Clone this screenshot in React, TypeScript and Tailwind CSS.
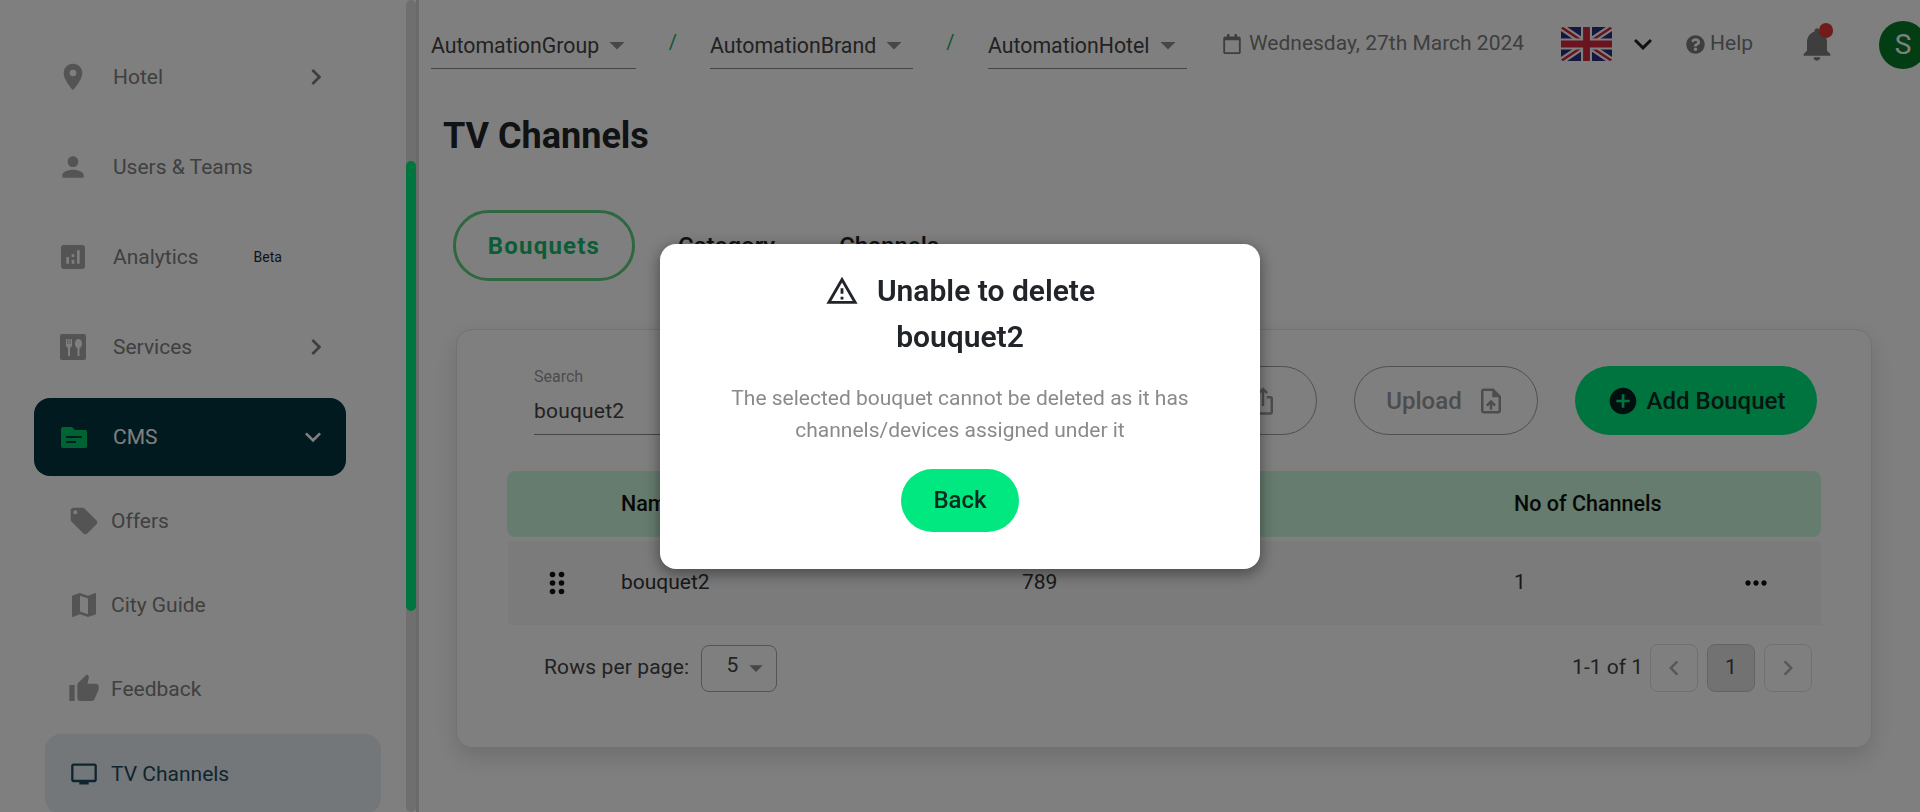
import { ReactNode } from 'react'
import {
  MdPlace,
  MdPerson,
  MdAnalytics,
  MdLocalOffer,
  MdMap,
  MdThumbUp,
  MdOutlineTv,
  MdChevronRight,
  MdExpandMore,
  MdArrowDropDown,
  MdOutlineWarningAmber,
  MdUploadFile,
  MdIosShare,
  MdAddCircle,
  MdMoreHoriz,
  MdNotifications,
} from 'react-icons/md'
import { FaQuestionCircle, FaRegCalendar } from 'react-icons/fa'

function ServicesIcon() {
  return (
    <svg width="26" height="26" viewBox="0 0 26 26" fill="currentColor">
      <path fillRule="evenodd" d="M2 0h22a2 2 0 0 1 2 2v22a2 2 0 0 1-2 2H2a2 2 0 0 1-2-2V2a2 2 0 0 1 2-2Zm4 5v6c0 1.4.9 2.5 2 2.8V22h2v-8.200c1.100-.3 2-1.400 2-2.800V5h-1.400v5h-.9V5H8.300v5h-.9V5H6Zm12.500 0c-2 0-3.500 2-3.500 4.800 0 2.200 1 3.900 2.500 4.400V22h2v-7.800c1.500-.5 2.500-2.200 2.500-4.400C22 7 20.500 5 18.500 5Z" />
    </svg>
  )
}

function FolderIcon() {
  return (
    <svg width="26" height="21" viewBox="0 0 26 21" fill="currentColor">
      <path fillRule="evenodd" d="M2 0h9l3 3h10a2 2 0 0 1 2 2v14a2 2 0 0 1-2 2H2a2 2 0 0 1-2-2V2a2 2 0 0 1 2-2Zm3 9v2h16V9H5Zm0 5v2h10v-2H5Z" />
    </svg>
  )
}

function DragDots() {
  return (
    <svg width="16" height="24" viewBox="0 0 16 24" fill="#111">
      <circle cx="3.500" cy="3.500" r="2.800" />
      <circle cx="12.500" cy="3.500" r="2.800" />
      <circle cx="3.500" cy="12" r="2.800" />
      <circle cx="12.500" cy="12" r="2.800" />
      <circle cx="3.500" cy="20.500" r="2.800" />
      <circle cx="12.500" cy="20.500" r="2.800" />
    </svg>
  )
}

function UkFlag() {
  return (
    <svg width="51" height="34" viewBox="0 0 60 40" className="rounded-[3px]">
      <rect width="60" height="40" fill="#2b2f7f" />
      <path d="M0 0 60 40M60 0 0 40" stroke="#fff" strokeWidth="8" />
      <path d="M0 0 60 40M60 0 0 40" stroke="#d3293f" strokeWidth="3" />
      <path d="M30 0v40M0 20h60" stroke="#fff" strokeWidth="13" />
      <path d="M30 0v40M0 20h60" stroke="#d3293f" strokeWidth="8" />
    </svg>
  )
}

function NavItem({ icon, label, chevron, badge }: { icon: ReactNode; label: string; chevron?: boolean; badge?: string }) {
  return (
    <div className="flex h-[90px] items-center text-[21px] text-[#808080]">
      <span className="flex w-[113px] justify-center pl-[33px] text-[#a8a8a8]">{icon}</span>
      <span className="pt-[2px]">{label}</span>
      {badge && <span className="ml-[55px] text-[14px] text-[#1f2937]">{badge}</span>}
      {chevron && (
        <span className="ml-auto mr-[74px] flex text-[#7c7c7c]">
          <MdChevronRight size={32} />
        </span>
      )}
    </div>
  )
}

function SubItem({ icon, label }: { icon: ReactNode; label: string }) {
  return (
    <div className="flex h-[84px] items-center text-[21px] text-[#808080]">
      <span className="flex w-[111px] justify-center pl-[57px] text-[#a8a8a8]">{icon}</span>
      <span className="pt-[2px]">{label}</span>
    </div>
  )
}

function Sidebar() {
  return (
    <aside className="flex h-full w-[419px] shrink-0 overflow-hidden">
      <nav className="w-[406px] shrink-0 pt-[32px]">
        <NavItem icon={<MdPlace size={32} />} label="Hotel" chevron />
        <NavItem icon={<MdPerson size={32} />} label="Users & Teams" />
        <NavItem icon={<MdAnalytics size={32} />} label="Analytics" badge="Beta" />
        <NavItem icon={<ServicesIcon />} label="Services" chevron />
        <div className="ml-[34px] mt-[6px] flex h-[78px] w-[312px] items-center rounded-[16px] bg-[#03343f] text-[21px] text-white">
          <span className="flex w-[79px] justify-center text-[#00c766]">
            <FolderIcon />
          </span>
          <span className="pt-[2px]">CMS</span>
          <span className="ml-auto mr-[17px] flex">
            <MdExpandMore size={32} />
          </span>
        </div>
        <div className="mt-[3px]">
          <SubItem icon={<MdLocalOffer size={32} />} label="Offers" />
          <SubItem icon={<MdMap size={32} />} label="City Guide" />
          <SubItem icon={<MdThumbUp size={32} />} label="Feedback" />
        </div>
        <div className="ml-[45px] mt-[3px] flex h-[80px] w-[336px] items-center rounded-[16px] bg-[#e6eef2] text-[21px] text-[#1f4a5c]">
          <span className="flex w-[66px] justify-center pl-[25px] pr-[13px]">
            <MdOutlineTv size={32} />
          </span>
          <span className="pt-[2px]">TV Channels</span>
        </div>
      </nav>
      <div className="h-full w-[10px] shrink-0 rounded-[5px] bg-[#dedede] pt-[161px]">
        <div className="h-[450px] rounded-[5px] bg-[#00eb7e]" />
      </div>
      <div className="h-full w-[3px] shrink-0 bg-[#d4d4d4]" />
    </aside>
  )
}

function Crumb({ label, width }: { label: string; width: string }) {
  return (
    <div className={`${width} flex h-[48px] shrink-0 items-center whitespace-nowrap border-b border-[#8a8a8a] text-[21.300px] text-[#444]`}>
      <span className="pt-[2px]">{label}</span>
      <span className="flex text-[#8e8e8e]">
        <MdArrowDropDown size={36} />
      </span>
    </div>
  )
}

function Header() {
  return (
    <header className="flex h-[69px] items-end pl-[12px]">
      <Crumb label="AutomationGroup" width="w-[205px]" />
      <span className="w-[74px] shrink-0 pb-[12px] text-center text-[20px] text-[#16b063]">/</span>
      <Crumb label="AutomationBrand" width="w-[203px]" />
      <span className="w-[75px] shrink-0 pb-[12px] text-center text-[20px] text-[#16b063]">/</span>
      <Crumb label="AutomationHotel" width="w-[199px]" />
      <div className="mb-[1px] ml-[35px] flex h-[48px] shrink-0 items-center gap-[7px] whitespace-nowrap text-[21px] text-[#7c7c7c]">
        <FaRegCalendar size={20} />
        <span>Wednesday, 27th March 2024</span>
      </div>
      <div className="mb-[1px] ml-[37px] flex h-[48px] shrink-0 items-center">
        <UkFlag />
      </div>
      <div className="mb-[1px] ml-[13px] flex h-[48px] shrink-0 items-center text-[#222]">
        <MdExpandMore size={36} />
      </div>
      <div className="mb-[1px] ml-[25px] flex h-[48px] shrink-0 items-center gap-[5px] text-[21px] text-[#7c7c7c]">
        <FaQuestionCircle size={19} />
        <span>Help</span>
      </div>
      <div className="relative mb-[1px] ml-[44px] flex h-[48px] shrink-0 items-center text-[#7c7c7c]">
        <MdNotifications size={40} />
        <span className="absolute right-[4px] top-[3px] h-[15px] w-[14px] rounded-full bg-[#e53935]" />
      </div>
      <div className="ml-[42px] flex h-[48px] w-[48px] shrink-0 items-center justify-center rounded-full bg-[#067a26] text-[28px] text-white">
        S
      </div>
    </header>
  )
}

function Tabs() {
  return (
    <div className="ml-[34px] mt-[51px] flex h-[71px] items-center">
      <div className="flex h-[71px] w-[182px] items-center justify-center rounded-full border-[3px] border-[#5fd07f] text-[24px] font-bold tracking-[1.200px] text-[#18bb6c]">
        Bouquets
      </div>
      <span className="ml-[43px] text-[24px] font-medium text-[#222]">Category</span>
      <span className="ml-[64px] text-[24px] font-medium text-[#222]">Channels</span>
    </div>
  )
}

function Toolbar() {
  return (
    <div className="flex h-[69px] items-end pl-[77px]">
      <div className="w-[381px] border-b border-[#8a8a8a] pb-[9px]">
        <div className="text-[16px] leading-[20px] text-[#999]">Search</div>
        <div className="mt-[10px] text-[21px] leading-[28px] tracking-[0.2px] text-[#444]">bouquet2</div>
      </div>
      <div className="ml-auto flex h-[69px] items-center gap-[37px] pr-[54px]">
        <div className="flex h-[69px] w-[184px] items-center justify-center gap-[6px] rounded-full border border-[#a0a0a0] text-[24px] font-medium text-[#9a9a9a]">
          Export
          <MdIosShare size={30} />
        </div>
        <div className="flex h-[69px] w-[184px] items-center justify-center gap-[14px] rounded-full border border-[#a0a0a0] text-[24px] font-medium text-[#9a9a9a]">
          Upload
          <MdUploadFile size={30} />
        </div>
        <div className="flex h-[69px] w-[242px] items-center justify-center gap-[8px] rounded-full bg-[#00e87f] text-[24px] font-medium text-[#0b2a20]">
          <MdAddCircle size={32} className="text-[#02201c]" />
          Add Bouquet
        </div>
      </div>
    </div>
  )
}

function BouquetTable() {
  return (
    <div className="ml-[50px] mt-[36px] w-[1314px]">
      <div className="grid h-[66px] grid-cols-[114px_401px_492px_1fr] items-center rounded-[8px] bg-[#ccf8dc] text-[21.5px] font-medium text-[#111]">
        <span />
        <span>Name</span>
        <span>LCN</span>
        <span>No of Channels</span>
      </div>
      <div className="ml-[1px] mt-[4px] grid h-[84px] grid-cols-[113px_401px_492px_1fr_81px] items-center bg-[#f6f6f6] text-[21px] text-[#333]">
        <span className="flex pl-[41px]">
          <DragDots />
        </span>
        <span>bouquet2</span>
        <span>789</span>
        <span>1</span>
        <span className="flex text-[#111]">
          <MdMoreHoriz size={32} />
        </span>
      </div>
    </div>
  )
}

function Pagination() {
  return (
    <div className="mt-[19px] flex h-[48px] items-center pl-[87px] pr-[59px] text-[21px] text-[#444]">
      <span className="tracking-[0.15px]">Rows per page:</span>
      <div className="ml-[12px] flex h-[47px] w-[76px] items-center justify-end rounded-[8px] border border-[#a8a8a8] pr-[4px]">
        <span className="mb-[4px] mr-[2px] text-[21px]">5</span>
        <span className="flex text-[#8c8c8c]">
          <MdArrowDropDown size={32} />
        </span>
      </div>
      <span className="ml-auto text-[21px]">1-1 of 1</span>
      <div className="ml-[7px] flex gap-[9px]">
        <div className="flex h-[48px] w-[48px] items-center justify-center rounded-[8px] border border-[#e0e0e0] text-[#b0b0b0]">
          <MdChevronRight size={30} className="rotate-180" />
        </div>
        <div className="flex h-[48px] w-[48px] items-center justify-center rounded-[8px] border border-[#c8c8c8] bg-[#e4e4e4] text-[21px] text-[#444]">
          1
        </div>
        <div className="flex h-[48px] w-[48px] items-center justify-center rounded-[8px] border border-[#e0e0e0] text-[#b0b0b0]">
          <MdChevronRight size={30} />
        </div>
      </div>
    </div>
  )
}

function BlockedDialog() {
  return (
    <div className="fixed inset-0 flex items-center justify-center bg-black/50">
      <div className="flex h-[325px] w-[600px] flex-col items-center rounded-[16px] bg-white pt-[24px] shadow-[0_4px_16px_rgba(0,0,0,0.45)]">
        <div className="flex h-[46px] items-center gap-[18px] text-[30px] font-semibold leading-[40px] text-[#212529]">
          <MdOutlineWarningAmber size={34} />
          <span>Unable to delete</span>
        </div>
        <div className="mt-[3px] h-[40px] text-[30px] font-semibold leading-[40px] text-[#212529]">bouquet2</div>
        <p className="mt-[25px] text-center text-[21px] leading-[32px] text-[#8a8a8a]">
          The selected bouquet cannot be deleted as it has
          <br />
          channels/devices assigned under it
        </p>
        <div className="mt-[23px] flex h-[63px] w-[118px] items-center justify-center rounded-full bg-[#00e87f] text-[24px] font-medium text-[#0b2a20]">
          Back
        </div>
      </div>
    </div>
  )
}

export default function App() {
  return (
    <div className="flex h-[812px] w-[1920px] overflow-hidden bg-white font-[family-name:Roboto,sans-serif]">
      <Sidebar />
      <main className="min-w-0 flex-1 overflow-hidden">
        <Header />
        <h1 className="ml-[24px] mt-[44px] text-[36px] font-bold leading-[46px] text-[#212529]">TV Channels</h1>
        <Tabs />
        <section className="ml-[37px] mt-[48px] h-[419px] w-[1416px] rounded-[16px] border border-[#e4e4e4] bg-white pt-[36px] shadow-[0_10px_24px_rgba(0,0,0,0.14)]">
          <Toolbar />
          <BouquetTable />
          <Pagination />
        </section>
      </main>
      <BlockedDialog />
    </div>
  )
}
